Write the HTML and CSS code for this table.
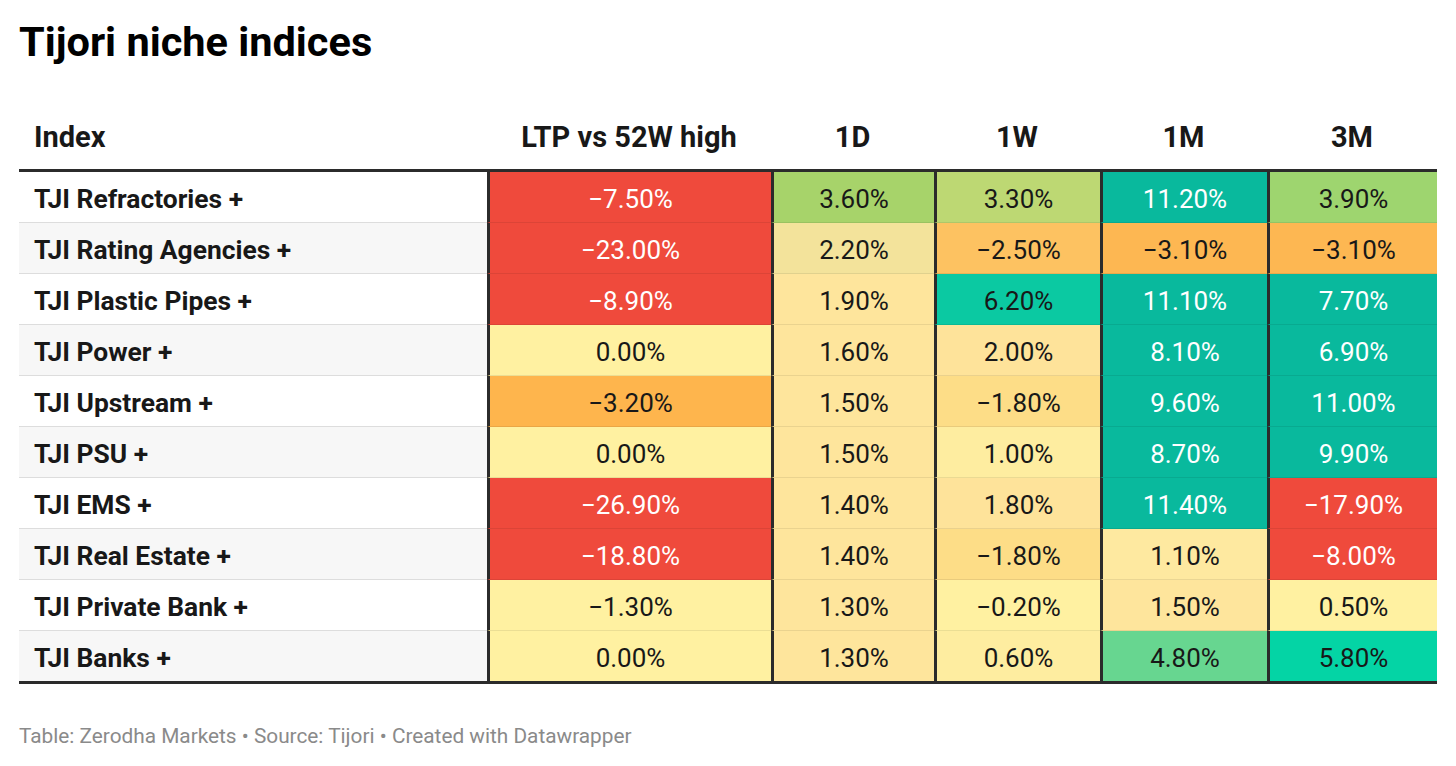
FILE: index.html
```html
<!DOCTYPE html>
<html lang="en">
<head>
<meta charset="utf-8">
<title>Tijori niche indices</title>
<link rel="stylesheet" href="styles.css">
</head>
<body>
<div class="chart">
  <h1 class="title">Tijori niche indices</h1>
  <table class="tbl">
    <colgroup>
      <col class="col-name">
      <col class="col-ltp">
      <col class="col-1d">
      <col class="col-1w">
      <col class="col-1m">
      <col class="col-3m">
    </colgroup>
    <thead>
      <tr>
        <th class="h-name">Index</th>
        <th>LTP vs 52W high</th>
        <th>1D</th>
        <th>1W</th>
        <th>1M</th>
        <th>3M</th>
      </tr>
    </thead>
    <tbody>
      <tr>
        <td class="name">TJI Refractories +</td>
        <td class="v red">−7.50%</td>
        <td class="v g-a">3.60%</td>
        <td class="v g-b">3.30%</td>
        <td class="v teal">11.20%</td>
        <td class="v g-c">3.90%</td>
      </tr>
      <tr class="alt">
        <td class="name">TJI Rating Agencies +</td>
        <td class="v red">−23.00%</td>
        <td class="v khaki">2.20%</td>
        <td class="v or-l">−2.50%</td>
        <td class="v or">−3.10%</td>
        <td class="v or">−3.10%</td>
      </tr>
      <tr>
        <td class="name">TJI Plastic Pipes +</td>
        <td class="v red">−8.90%</td>
        <td class="v y2">1.90%</td>
        <td class="v teal-b">6.20%</td>
        <td class="v teal">11.10%</td>
        <td class="v teal">7.70%</td>
      </tr>
      <tr class="alt">
        <td class="name">TJI Power +</td>
        <td class="v y0">0.00%</td>
        <td class="v y2">1.60%</td>
        <td class="v y3">2.00%</td>
        <td class="v teal">8.10%</td>
        <td class="v teal">6.90%</td>
      </tr>
      <tr>
        <td class="name">TJI Upstream +</td>
        <td class="v or-d">−3.20%</td>
        <td class="v y2">1.50%</td>
        <td class="v y4">−1.80%</td>
        <td class="v teal">9.60%</td>
        <td class="v teal">11.00%</td>
      </tr>
      <tr class="alt">
        <td class="name">TJI PSU +</td>
        <td class="v y0">0.00%</td>
        <td class="v y2">1.50%</td>
        <td class="v y1">1.00%</td>
        <td class="v teal">8.70%</td>
        <td class="v teal">9.90%</td>
      </tr>
      <tr>
        <td class="name">TJI EMS +</td>
        <td class="v red">−26.90%</td>
        <td class="v y2">1.40%</td>
        <td class="v y3">1.80%</td>
        <td class="v teal">11.40%</td>
        <td class="v red">−17.90%</td>
      </tr>
      <tr class="alt">
        <td class="name">TJI Real Estate +</td>
        <td class="v red">−18.80%</td>
        <td class="v y2">1.40%</td>
        <td class="v y4">−1.80%</td>
        <td class="v y1b">1.10%</td>
        <td class="v red">−8.00%</td>
      </tr>
      <tr>
        <td class="name">TJI Private Bank +</td>
        <td class="v y0">−1.30%</td>
        <td class="v y2">1.30%</td>
        <td class="v y0">−0.20%</td>
        <td class="v y2">1.50%</td>
        <td class="v y0">0.50%</td>
      </tr>
      <tr class="alt last">
        <td class="name">TJI Banks +</td>
        <td class="v y0">0.00%</td>
        <td class="v y2">1.30%</td>
        <td class="v y1">0.60%</td>
        <td class="v green">4.80%</td>
        <td class="v teal-c">5.80%</td>
      </tr>
    </tbody>
  </table>
  <p class="footer">Table: Zerodha Markets • Source: Tijori • Created with Datawrapper</p>
</div>
</body>
</html>
```

FILE: styles.css
```css
html, body {
  margin: 0;
  padding: 0;
  background: #ffffff;
}

body {
  font-family: Roboto, "Noto Sans", "Liberation Sans", sans-serif;
  color: #181818;
}

.chart {
  padding: 0 0 0 19px;
}

.title {
  margin: 17px 0 0 0;
  font-size: 41.5px;
  line-height: 49px;
  font-weight: 700;
  color: #000000;
}

.tbl {
  table-layout: fixed;
  border-collapse: separate;
  border-spacing: 0;
  width: 1418px;
}

.col-name { width: 468px; }
.col-ltp { width: 284px; }
.col-1d { width: 163px; }
.col-1w { width: 166px; }
.col-1m { width: 167px; }
.col-3m { width: 170px; }

.tbl th {
  font-size: 29px;
  font-weight: 700;
  line-height: 34px;
  padding: 54px 0 15px 0;
  text-align: center;
  border-bottom: 3px solid #2b2b2b;
  color: #181818;
  white-space: nowrap;
}

.tbl th.h-name {
  text-align: left;
  padding-left: 15px;
}

.tbl td {
  height: 47px;
  padding: 3px 0 0 0;
  line-height: 46px;
  border-bottom: 1px solid rgba(0, 0, 0, 0.08);
  white-space: nowrap;
}

.tbl td.name {
  font-size: 26.4px;
  font-weight: 700;
  padding-left: 15px;
  background: #ffffff;
  border-bottom-color: #dddddd;
}

.tbl tr.alt td.name {
  background: #f7f7f7;
}

.tbl td.v {
  font-size: 26px;
  font-weight: 400;
  text-align: center;
  border-left: 3px solid #2b2b2b;
  color: #181818;
}

.tbl tr.last td {
  border-bottom: 3px solid #2b2b2b;
}

/* heat-map colours */
.red { background: #ef4a3c; color: #ffffff !important; }
.teal { background: #09b99d; color: #ffffff !important; }
.teal-b { background: #0bc9a2; }
.teal-c { background: #04d4a5; }
.green { background: #67d690; }
.g-a { background: #a7d36a; }
.g-b { background: #bdd873; }
.g-c { background: #9ed56f; }
.khaki { background: #f3e39b; }
.or-l { background: #fdc261; }
.or { background: #fdb752; }
.or-d { background: #feb54d; }
.y0 { background: #fff1a1; }
.y1 { background: #feeda0; }
.y1b { background: #fee9a0; }
.y2 { background: #fee59c; }
.y3 { background: #fee39a; }
.y4 { background: #fddd87; }

.footer {
  margin: 40px 0 0 0;
  font-size: 20.8px;
  line-height: 24px;
  color: #8a8a8a;
}
```
